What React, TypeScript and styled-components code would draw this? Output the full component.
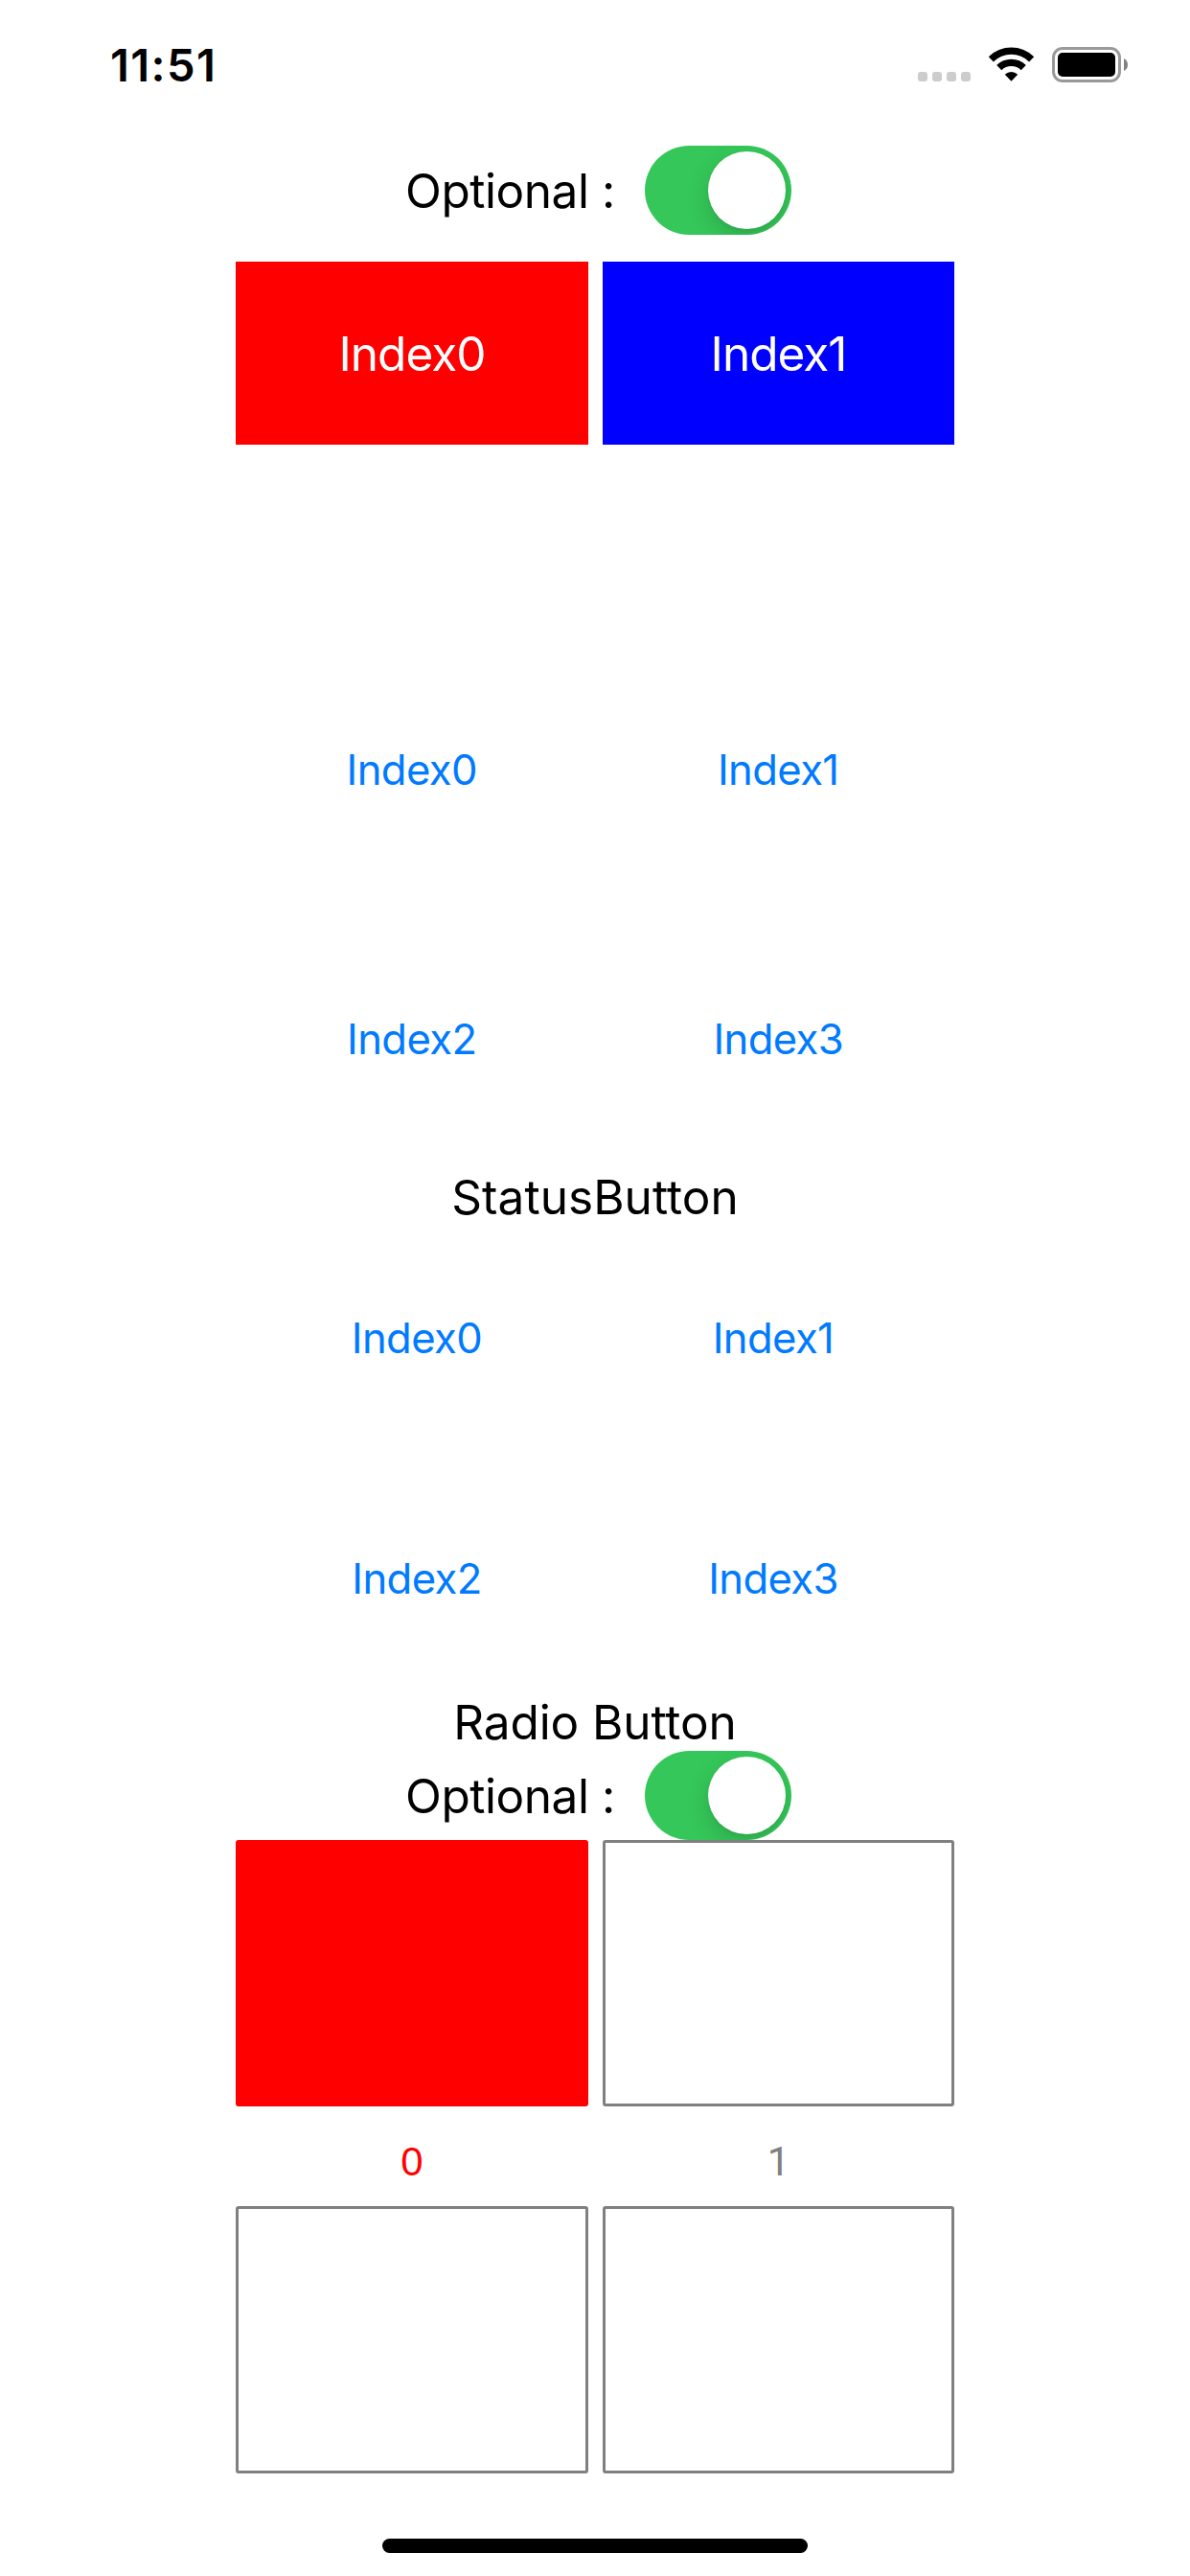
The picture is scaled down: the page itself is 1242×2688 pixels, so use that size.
import React, { useState } from "react";
import styled, { createGlobalStyle } from "styled-components";

const GlobalStyle = createGlobalStyle`
  body {
    margin: 0;
    background: #fff;
  }
  button {
    appearance: none;
    margin: 0;
    padding: 0;
    border: 0;
    background: none;
    font: inherit;
  }
`;

const Screen = styled.main`
  display: flex;
  flex-direction: column;
  align-items: center;
  width: 1242px;
  height: 2688px;
  overflow: hidden;
  background: #fff;
  color: #000;
  font-family: Inter, "Liberation Sans", sans-serif;
  font-size: 49.5px;
  line-height: 60px;
`;

const StatusBar = styled.header`
  box-sizing: border-box;
  display: flex;
  align-items: flex-start;
  justify-content: space-between;
  width: 100%;
  height: 152px;
  padding: 49px 65px 0 115px;
`;

const Clock = styled.span`
  font-size: 47px;
  font-weight: 600;
  line-height: 38px;
  letter-spacing: 1.4px;
`;

const Indicators = styled.div`
  display: flex;
  align-items: flex-start;
`;

const SignalDots = styled.div`
  display: flex;
  gap: 5px;
  margin: 26px 18px 0 0;
`;

const Dot = styled.i`
  width: 10px;
  height: 10px;
  border-radius: 3px;
  background: #ccc;
`;

const WifiIcon = styled.svg`
  display: block;
  margin-right: 18px;
`;

const BatteryIcon = styled.svg`
  display: block;
`;

const OptionalRow = styled.div`
  box-sizing: border-box;
  display: flex;
  align-items: center;
  gap: 30px;
  width: 410px;
  height: 93px;
  padding-left: 7px;
`;

const OptionalLabel = styled.span`
  width: 220px;
  white-space: pre;
  letter-spacing: -0.45px;
`;

const Track = styled.button<{ $on: boolean }>`
  box-sizing: border-box;
  display: flex;
  justify-content: ${(p) => (p.$on ? "flex-end" : "flex-start")};
  width: 153px;
  height: 93px;
  padding: 6px;
  border-radius: 47px;
  overflow: hidden;
  background: ${(p) => (p.$on ? "#35c759" : "#e9e9ea")};
`;

const Knob = styled.span`
  width: 81px;
  height: 81px;
  border-radius: 50%;
  background: #fff;
  box-shadow: 0 9px 24px rgba(0, 0, 0, 0.15), 0 3px 3px rgba(0, 0, 0, 0.04);
`;

const Pair = styled.div<{ $top?: number }>`
  display: grid;
  grid-template-columns: 368px 367px;
  column-gap: 15px;
  width: 750px;
  margin-top: ${(p) => p.$top ?? 0}px;
`;

const ColorButton = styled.button<{ $color: string }>`
  height: 191px;
  background: ${(p) => p.$color};
  color: #fff;
  letter-spacing: -1px;
`;

const LinkGrid = styled.div<{ $width: number; $row: number; $top: number }>`
  display: grid;
  grid-template-columns: 1fr 1fr;
  grid-auto-rows: ${(p) => p.$row}px;
  gap: 15px;
  width: ${(p) => p.$width}px;
  margin-top: ${(p) => p.$top}px;
`;

const LinkButton = styled.button`
  color: #007aff;
  font-size: 43.6px;
  letter-spacing: -0.6px;
`;

const Title = styled.h2<{ $spacing: number }>`
  margin: 1px 0 0;
  height: 60px;
  font-size: inherit;
  font-weight: 400;
  letter-spacing: ${(p) => p.$spacing}px;
`;

const RadioBox = styled.button<{ $selected?: boolean; $height: number }>`
  box-sizing: border-box;
  height: ${(p) => p.$height}px;
  border: 3px solid ${(p) => (p.$selected ? "#f00" : "#808080")};
  border-radius: 3px;
  background: ${(p) => (p.$selected ? "#f00" : "#fff")};
`;

const RadioLabel = styled.span<{ $selected?: boolean; $font: string }>`
  box-sizing: border-box;
  height: 104px;
  padding-top: 28px;
  color: ${(p) => (p.$selected ? "#f00" : "#808080")};
  font-family: ${(p) => p.$font}, sans-serif;
  font-size: 42px;
  text-align: center;
`;

const HomeIndicator = styled.div`
  width: 444px;
  height: 15px;
  margin-top: 68px;
  border-radius: 8px;
  background: #000;
`;

function OptionalSwitch() {
  const [on, setOn] = useState(true);
  return (
    <OptionalRow>
      <OptionalLabel>Optional :</OptionalLabel>
      <Track $on={on} role="switch" aria-checked={on} onClick={() => setOn(!on)}>
        <Knob />
      </Track>
    </OptionalRow>
  );
}

const names = ["Index0", "Index1", "Index2", "Index3"];

export default function App() {
  return (
    <Screen>
      <GlobalStyle />
      <StatusBar>
        <Clock>11:51</Clock>
        <Indicators>
          <SignalDots>
            <Dot />
            <Dot />
            <Dot />
            <Dot />
          </SignalDots>
          <WifiIcon width="49" height="37" viewBox="0 0 49 37">
            <path d="M.8 10.2a34 34 0 0 1 47.4 0l-5.1 5.2a26.5 26.5 0 0 0-37.2 0z" />
            <path d="M9.2 18.9a22 22 0 0 1 30.6 0l-5.1 5.3a14.8 14.8 0 0 0-20.4 0z" />
            <path d="M17.8 28.7a9.8 9.8 0 0 1 13.4 0l-6.7 7.1z" />
          </WifiIcon>
          <BatteryIcon width="79" height="37" viewBox="0 0 79 37">
            <rect x="1.5" y="1.5" width="69" height="34" rx="9.5" fill="none" stroke="#999" strokeWidth="3" />
            <rect x="6" y="6" width="60" height="25" rx="5" />
            <path d="M75 12q4 2 4 6.500t-4 6.500z" fill="#808080" />
          </BatteryIcon>
        </Indicators>
      </StatusBar>

      <OptionalSwitch />
      <Pair $top={28}>
        <ColorButton $color="#f00">Index0</ColorButton>
        <ColorButton $color="#00f">Index1</ColorButton>
      </Pair>

      <LinkGrid $width={750} $row={266} $top={207}>
        {names.map((name) => (
          <LinkButton key={name}>{name}</LinkButton>
        ))}
      </LinkGrid>

      <Title $spacing={0.05}>StatusButton</Title>
      <LinkGrid $width={729} $row={236} $top={0}>
        {names.map((name) => (
          <LinkButton key={name}>{name}</LinkButton>
        ))}
      </LinkGrid>

      <Title $spacing={-0.1}>Radio Button</Title>
      <OptionalSwitch />
      <Pair>
        <RadioBox $selected $height={278} />
        <RadioBox $height={278} />
        <RadioLabel $selected $font='"Liberation Sans"'>0</RadioLabel>
        <RadioLabel $font="Roboto">1</RadioLabel>
        <RadioBox $height={279} />
        <RadioBox $height={279} />
      </Pair>
      <HomeIndicator />
    </Screen>
  );
}
